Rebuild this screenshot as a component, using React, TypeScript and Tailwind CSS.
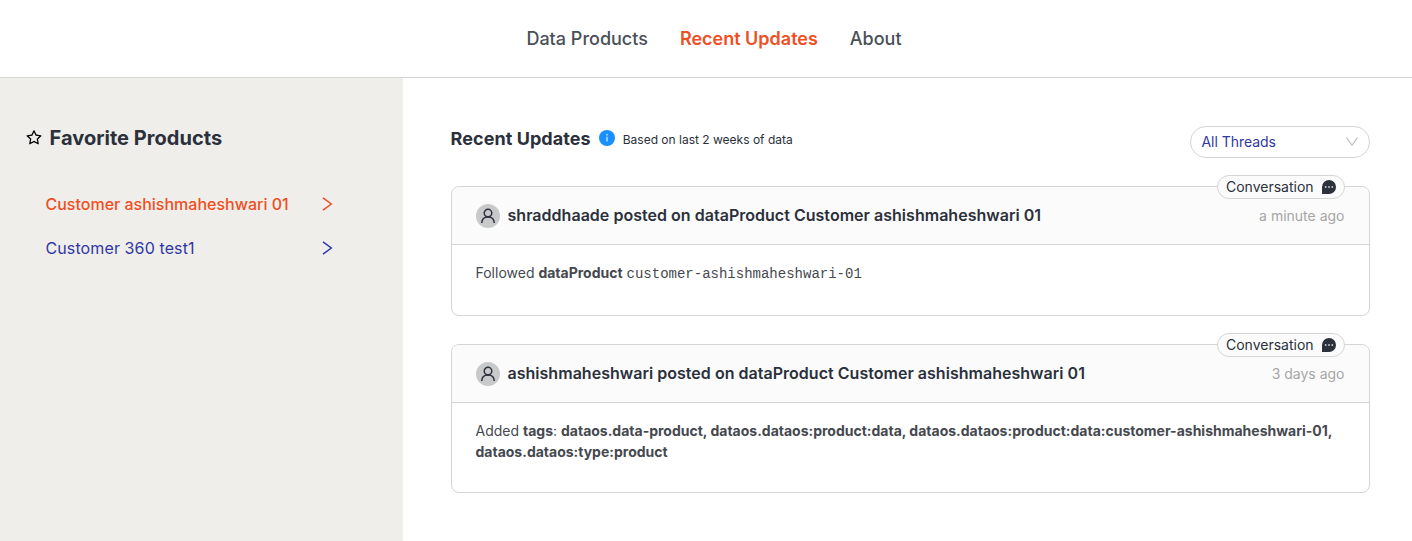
import React from "react";

function Star() {
  return (
    <svg className="-mr-px h-[18px] w-[18px] shrink-0" viewBox="0 0 1024 1024" fill="#000">
      <path d="M908.1 353.1l-253.9-36.9L540.7 86.1c-3.1-6.3-8.2-11.4-14.5-14.5-15.8-7.8-35-1.3-42.9 14.5L369.8 316.2l-253.9 36.9c-7 1-13.4 4.3-18.3 9.3a32.05 32.05 0 00.6 45.3l183.7 179.1-43.4 252.9a31.95 31.95 0 0046.4 33.7L512 754l227.1 119.4c6.2 3.3 13.4 4.4 20.3 3.2 17.4-3 29.1-19.5 26.1-36.9l-43.4-252.9 183.7-179.1c5-4.9 8.3-11.3 9.3-18.3 2.7-17.5-9.5-33.7-27-36.3zM664.8 561.6l36.1 210.3L512 672.7 323.1 772l36.1-210.3-152.8-149L417.6 382 512 190.7 606.4 382l211.2 30.7-152.8 148.9z" />
    </svg>
  );
}

function Product({ name, active }: { name: string; active?: boolean }) {
  return (
    <a className={`flex h-11 items-center justify-between ${active ? "font-medium text-[#f04e23]" : "tracking-[0.11px] text-[#3037a6]"}`}>
      <span>{name}</span>
      <svg className="h-4 w-3" viewBox="0 0 12 16" fill="none" stroke="currentColor" strokeWidth="1.5">
        <path d="M2 1.8l8.3 6.2L2 14.2" />
      </svg>
    </a>
  );
}

function Card({ title, time, className, children }: { title: string; time: string; className: string; children: React.ReactNode }) {
  return (
    <article className={`relative rounded-lg border border-[#d5d5d5] ${className}`}>
      <div className="absolute -top-3 right-6 flex h-6 w-32 items-center justify-between rounded-full border border-[#d5d5d5] bg-[#fbfbfb] pr-[7px] pl-2 text-sm text-[#2b303b]">
        <span>Conversation</span>
        <svg className="h-4 w-4" viewBox="0 0 16 16">
          <path d="M8 1a7 7 0 1 1 0 14H1V8a7 7 0 0 1 7-7z" fill="#2b303b" />
          <g fill="#c9cbce"><circle cx="4.7" cy="8" r=".9" /><circle cx="8" cy="8" r=".9" /><circle cx="11.3" cy="8" r=".9" /></g>
        </svg>
      </div>
      <header className="flex h-[58px] items-center rounded-t-lg border-b border-[#d5d5d5] bg-[#fbfbfb] px-6">
        <svg className="mr-[7.5px] h-6 w-6 shrink-0" viewBox="0 0 24 24" fill="none">
          <circle cx="12" cy="12" r="12" fill="#c8c9ca" />
          <g stroke="#2b303b" strokeWidth="1.5"><circle cx="12" cy="9.1" r="3.8" /><path d="M5.7 19c.2-3.7 2.6-6.1 6.3-6.1s6.1 2.4 6.3 6.1" /></g>
        </svg>
        <h2 className="-mt-0.5 grow text-base font-semibold tracking-[0.025px] text-[#2b303b]">{title}</h2>
        <time className="mr-[0.5px] text-sm text-[#a6a6a6]">{time}</time>
      </header>
      <p className="pr-6 pl-[23.5px] pt-[17px] text-sm leading-[21px] text-[#45494f]">{children}</p>
    </article>
  );
}

export default function App() {
  return (
    <div className="flex h-[541px] flex-col bg-white font-['Inter',sans-serif]">
      <nav className="flex h-[78px] shrink-0 items-center justify-center gap-8 border-b border-[#d5d5d5] pl-4 text-lg font-medium text-[#4a4f58]">
        <a>Data Products</a>
        <a className="font-semibold text-[#f04e23]">Recent Updates</a>
        <a>About</a>
      </nav>
      <div className="flex grow">
        <aside className="w-[403px] shrink-0 bg-[#efeeea] pt-[46px]">
          <h1 className="flex h-7 items-center gap-2 pl-[25px] text-xl font-bold tracking-[0.03px] text-[#2b303b]"><Star /><span className="-ml-[0.5px]">Favorite Products</span></h1>
          <div className="mt-[30px] w-[333px] pl-[45.5px]">
            <Product name="Customer ashishmaheshwari 01" active />
            <Product name="Customer 360 test1" />
          </div>
        </aside>
        <main className="grow pr-[42px] pl-12 pt-12">
          <div className="flex h-8 items-center">
            <h1 className="-mt-1.5 -ml-[0.5px] text-lg font-bold tracking-[0.07px] text-[#2b303b]">Recent Updates</h1>
            <svg className="-mt-2 mr-2 ml-2 h-4 w-4" viewBox="0 0 16 16"><circle cx="8" cy="8" r="8" fill="#1890ff" /><path d="M8 6.8V11.5" stroke="#b9dcff" strokeWidth="1.5" /><circle cx="8" cy="4.7" r=".9" fill="#b9dcff" /></svg>
            <span className="-mt-1 grow text-xs text-[#2b303b]">Based on last 2 weeks of data</span>
            <div className="flex h-8 w-[180px] items-center justify-between rounded-full border border-[#d5d5d5] pr-[11px] pl-[10.5px] text-sm tracking-[-0.05px] text-[#3037a6]">
              All Threads
              <svg className="h-3 w-3" viewBox="0 0 12 12" fill="none" stroke="#bfbfbf" strokeWidth="1.2"><path d="M.5 1.7L6 9.3l5.5-7.6" /></svg>
            </div>
          </div>
          <Card title="shraddhaade posted on dataProduct Customer ashishmaheshwari 01" time="a minute ago" className="mt-7 h-[130px]">
            Followed <b className="font-bold">dataProduct</b> <code className="font-['Liberation_Mono',monospace]">customer-ashishmaheshwari-01</code>
          </Card>
          <Card title="ashishmaheshwari posted on dataProduct Customer ashishmaheshwari 01" time="3 days ago" className="mt-7 h-[149px]">
            Added <b className="font-bold">tags</b>: <b className="font-bold">dataos.data-product, dataos.dataos:product:data, dataos.dataos:product:data:customer-ashishmaheshwari-01, dataos.dataos:type:product</b>
          </Card>
        </main>
      </div>
    </div>
  );
}
